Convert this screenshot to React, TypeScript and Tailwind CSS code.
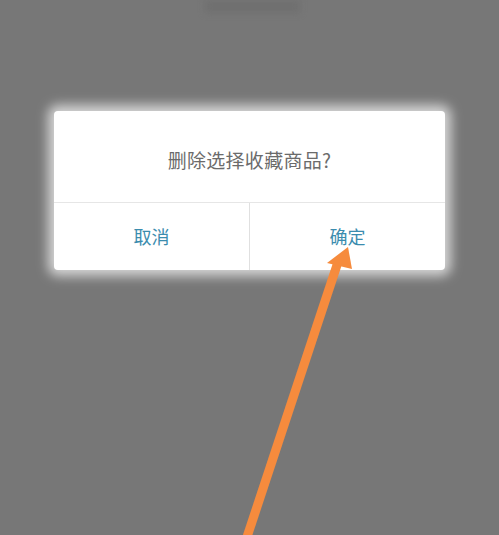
import React from 'react';

const font = { fontFamily: '"Noto Sans CJK SC", "Noto Sans", sans-serif' };

export default function App() {
  return (
    <div className="relative w-[499px] h-[535px] overflow-hidden bg-[#777777]" style={font}>
      {/* blurred status strip at the top */}
      <div className="absolute left-[205px] top-0 w-[95px] h-[13px] bg-[#707070] blur-[3px]" />

      <div className="pt-[111px] pl-[54px]">
        <div className="w-[391px] h-[159px] flex flex-col rounded-[4px] bg-white shadow-[0_0_12px_6px_rgba(255,255,255,0.7)]">
          <div className="h-[92px] flex items-center justify-center pt-[8px] border-b border-[#e6e6e6]">
            <span className="text-[19px] text-[#6b6b6b] tracking-[0.3px]">删除选择收藏商品?</span>
          </div>
          <div className="flex-1 flex">
            <button className="flex-1 flex items-center justify-center border-r border-[#e0e0e0] text-[18px] text-[#3b8cae]">
              取消
            </button>
            <button className="flex-1 flex items-center justify-center text-[18px] text-[#3b8cae]">
              确定
            </button>
          </div>
        </div>
      </div>

      {/* annotation arrow */}
      <svg className="absolute left-0 top-0 pointer-events-none" width="499" height="535" viewBox="0 0 499 535">
        <line x1="246" y1="540" x2="338" y2="262" stroke="#f68b3d" strokeWidth="9" />
        <polygon points="348,247 327,263 352,269" fill="#f68b3d" />
      </svg>
    </div>
  );
}
